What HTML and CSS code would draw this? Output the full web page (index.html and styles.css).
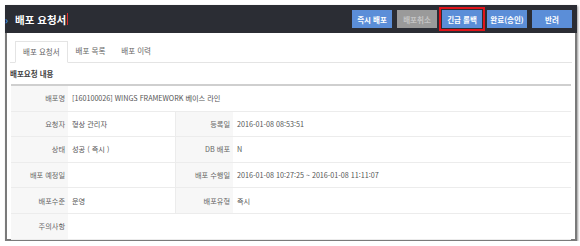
FILE: index.html
```html
<!DOCTYPE html>
<html lang="ko">
<head>
  <meta charset="UTF-8" />
  <title>배포 요청서</title>
  <link rel="stylesheet" href="styles.css">
</head>
<body>
  <div class="panel">
    <div class="header">
      <h1><span class="arrow">›</span>배포 요청서<span class="caret"></span></h1>
      <div class="actions">
        <button class="btn">즉시 배포</button>
        <button class="btn off">배포취소</button>
        <span class="focus"><button class="btn">긴급 롤백</button></span>
        <button class="btn">완료(승인)</button>
        <button class="btn">반려</button>
      </div>
    </div>
    <div class="content">
      <div class="tabs">
        <div class="tab active">배포 요청서</div>
        <div class="tab">배포 목록</div>
        <div class="tab">배포 이력</div>
      </div>
      <h2>배포요청 내용</h2>
      <table class="info">
        <tr><th>배포명</th><td colspan="3">[160100026] WINGS FRAMEWORK 베이스 라인</td></tr>
        <tr><th>요청자</th><td class="mid">형상 관리자</td><th>등록일</th><td>2016-01-08 08:53:51</td></tr>
        <tr><th>상태</th><td class="mid">성공 ( 즉시 )</td><th>DB 배포</th><td>N</td></tr>
        <tr><th>배포 예정일</th><td class="mid"></td><th>배포 수행일</th><td>2016-01-08 10:27:25 ~ 2016-01-08 11:11:07</td></tr>
        <tr><th>배포수준</th><td class="mid">운영</td><th>배포유형</th><td>즉시</td></tr>
        <tr><th>주의사항</th><td colspan="3"></td></tr>
      </table>
    </div>
  </div>
</body>
</html>
```

FILE: styles.css
```css
body {
  margin: 0;
  background: #fff;
  font-family: "Noto Sans CJK KR", "Noto Sans", sans-serif;
  color: #555;
}
.panel {
  margin: 5px 3px 0 5px;
  height: 236px;
  box-sizing: border-box;
  border: 2px solid #7a7a7a;
  border-top: none;
  box-shadow: 1px 1px 2px #999;
}
.header {
  height: 28px;
  margin-left: -2px;
  margin-right: -2px;
  background: #2b2d34;
  display: flex;
  align-items: center;
  justify-content: space-between;
  padding-right: 5px;
}
h1 {
  margin: 0;
  font-size: 10.5px;
  font-weight: bold;
  color: #fff;
  display: flex;
  align-items: center;
}
.arrow {
  color: #3d8ee0;
  font-size: 10px;
  width: 10px;
  padding-left: 0;
}
.caret {
  width: 1px;
  height: 12px;
  background: #e03030;
  margin-left: 1px;
}
.actions {
  display: flex;
  align-items: center;
  gap: 5px;
}
.btn {
  border: none;
  background: #5b8ed8;
  color: #fff;
  font-family: inherit;
  font-size: 7.5px;
  font-weight: bold;
  height: 18px;
  width: 40px;
  padding: 0;
}
.btn.off {
  background: #9a9a9a;
  color: #c4c4c4;
}
.focus {
  border: 2px solid #e0141a;
  padding: 1px 1px;
  margin: 0 -3px;
  display: flex;
}
.content {
  padding: 0 3px 0 3px;
}
.tabs {
  display: flex;
  padding: 8px 0 0 5px;
  border-bottom: 1px solid #e4e4e4;
}
.tab {
  font-size: 7.5px;
  padding: 0 8px;
  height: 20px;
  line-height: 19px;
  color: #666;
  white-space: nowrap;
}
.tab.active {
  border: 1px solid #e4e4e4;
  border-bottom: 1px solid #fff;
  margin-bottom: -1px;
  padding: 0 7px;
}
h2 {
  margin: 0;
  font-size: 7.5px;
  font-weight: bold;
  color: #444;
  height: 21px;
  line-height: 22px;
}
.info {
  margin-left: 1px;
  width: 560px;
  border-collapse: collapse;
  border-top: 2px solid #cfcfcf;
  font-size: 7.2px;
}
.info th,
.info td {
  height: 24.6px;
  padding: 0;
  border-bottom: 1px solid #ececec;
  white-space: nowrap;
}
.info th {
  width: 54px;
  padding-right: 3px;
  text-align: right;
  font-weight: normal;
  color: #666;
  background: #f7f7f7;
}
.info td {
  padding-left: 4px;
  color: #555;
}
.info td.mid {
  width: 103px;
  border-right: 1px solid #ececec;
}
```
